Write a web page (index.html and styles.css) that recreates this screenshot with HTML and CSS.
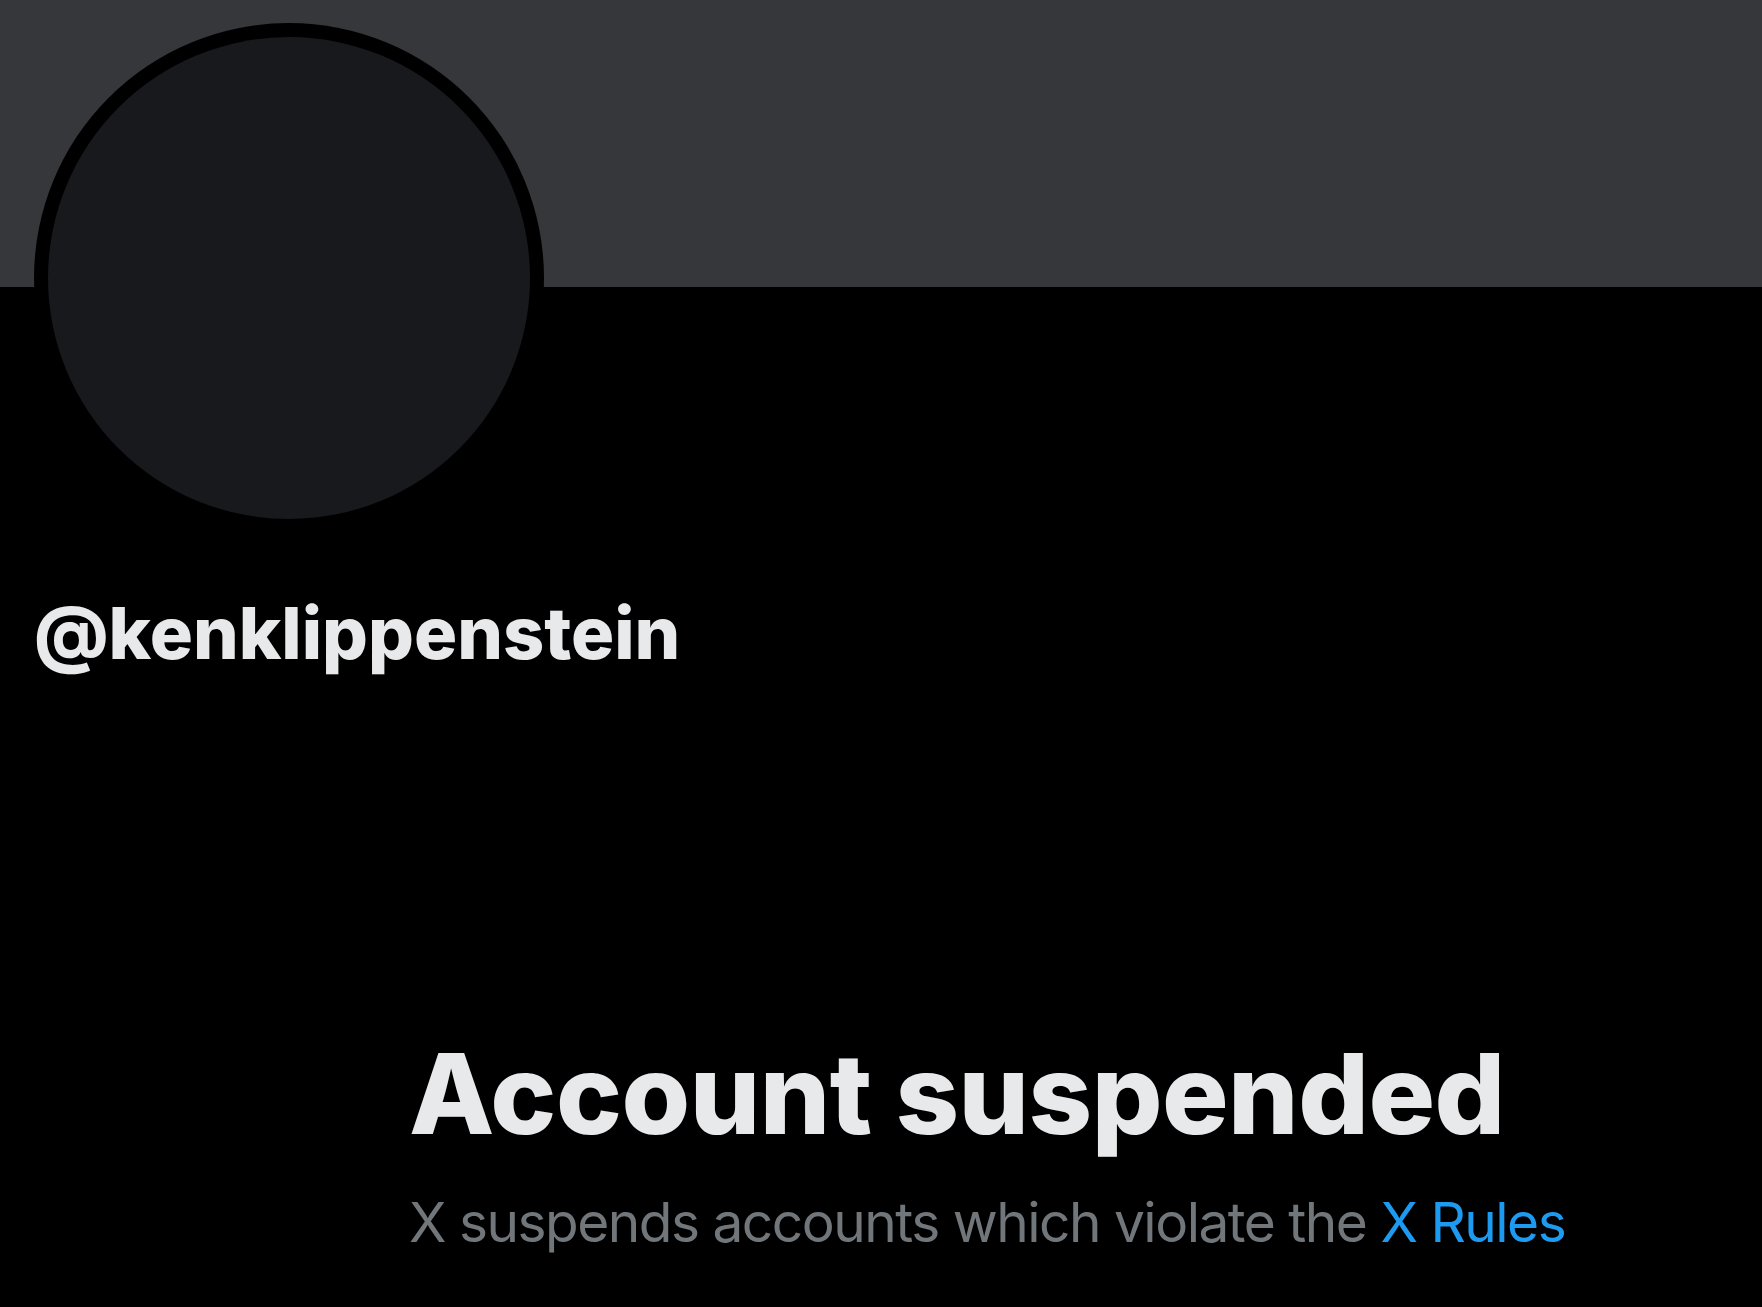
FILE: index.html
```html
<!DOCTYPE html>
<html lang="en">
<head>
<meta charset="utf-8">
<title>@kenklippenstein</title>
<link rel="stylesheet" href="styles.css">
</head>
<body>
<div class="page">
  <div class="banner"></div>
  <div class="profile">
    <div class="avatar"><div class="avatar-inner"></div></div>
    <div class="handle">@kenklippenstein</div>
  </div>
  <div class="empty">
    <div class="title">Account suspended</div>
    <div class="subtitle">X suspends accounts which violate the <a class="link" href="#">X Rules</a></div>
  </div>
</div>
</body>
</html>
```
FILE: styles.css
```css
html, body {
  margin: 0;
  padding: 0;
  background: #000000;
}
.page {
  width: 1762px;
  height: 1307px;
  overflow: hidden;
  background: #000000;
  font-family: Inter, "Liberation Sans", sans-serif;
}
.banner {
  height: 287px;
  background: #36373b;
}
.profile {
  padding-left: 34px;
}
.avatar {
  width: 510px;
  height: 510px;
  margin-top: -264px;
  box-sizing: border-box;
  border-radius: 50%;
  background: #000000;
  padding: 14px;
}
.avatar-inner {
  width: 100%;
  height: 100%;
  border-radius: 50%;
  background: #18191d;
}
.handle {
  margin-top: 57px;
  font-size: 72px;
  line-height: 86px;
  font-weight: 800;
  color: #e7e9ea;
}
.empty {
  padding-left: 409px;
  margin-top: 351px;
}
.title {
  font-size: 111px;
  line-height: 134px;
  font-weight: 800;
  letter-spacing: -0.5px;
  color: #e7e9ea;
}
.subtitle {
  margin-top: 28px;
  font-size: 55px;
  line-height: 66px;
  font-weight: 400;
  letter-spacing: -1.5px;
  color: #71767b;
}
.link {
  color: #1d9bf0;
  text-decoration: none;
}
```
